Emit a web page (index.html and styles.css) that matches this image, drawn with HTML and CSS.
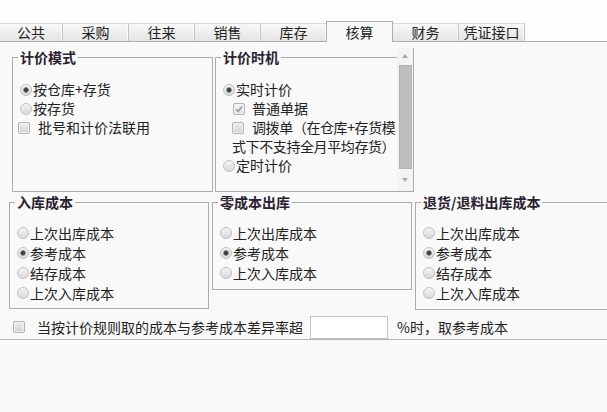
FILE: index.html
```html
<!DOCTYPE html>
<html lang="zh-CN">
<head>
<meta charset="utf-8">
<title>核算</title>
<link rel="stylesheet" href="styles.css">
</head>
<body>
<div class="top">
  <div class="tabs">
    <div class="tab first">公共</div>
    <div class="tab">采购</div>
    <div class="tab">往来</div>
    <div class="tab">销售</div>
    <div class="tab">库存</div>
    <div class="tab active">核算</div>
    <div class="tab">财务</div>
    <div class="tab">凭证接口</div>
  </div>
</div>

<div class="row1">
  <fieldset class="box mode">
    <legend>计价模式</legend>
    <div class="opts">
      <div class="opt"><span class="rb on"></span>按仓库+存货</div>
      <div class="opt"><span class="rb"></span>按存货</div>
      <div class="opt ck"><span class="cb"></span>批号和计价法联用</div>
    </div>
  </fieldset>
  <div class="scrollwrap">
    <fieldset class="box timing">
      <legend>计价时机</legend>
      <div class="opts">
        <div class="opt"><span class="rb on"></span>实时计价</div>
        <div class="opt sub"><span class="cb on"><svg viewBox="0 0 10 10" width="10" height="10"><path d="M2.2 5.2 L4.2 7.2 L8 2.6" fill="none" stroke="#9a9a9a" stroke-width="1.6"/></svg></span>普通单据</div>
        <div class="optw"><span class="cb"></span>调拨单（在仓库+存货模<br>式下不支持全月平均存货）</div>
        <div class="opt"><span class="rb"></span>定时计价</div>
      </div>
    </fieldset>
    <div class="vscroll">
      <div class="arr up"></div>
      <div class="thumb"></div>
      <div class="arr down"></div>
    </div>
  </div>
</div>

<div class="row2">
  <fieldset class="box in">
    <legend>入库成本</legend>
    <div class="opts2">
      <div class="opt"><span class="rb"></span>上次出库成本</div>
      <div class="opt"><span class="rb on"></span>参考成本</div>
      <div class="opt"><span class="rb"></span>结存成本</div>
      <div class="opt"><span class="rb"></span>上次入库成本</div>
    </div>
  </fieldset>
  <fieldset class="box zero">
    <legend>零成本出库</legend>
    <div class="opts2">
      <div class="opt"><span class="rb"></span>上次出库成本</div>
      <div class="opt"><span class="rb on"></span>参考成本</div>
      <div class="opt"><span class="rb"></span>上次入库成本</div>
    </div>
  </fieldset>
  <fieldset class="box ret">
    <legend>退货/退料出库成本</legend>
    <div class="opts2">
      <div class="opt"><span class="rb"></span>上次出库成本</div>
      <div class="opt"><span class="rb on"></span>参考成本</div>
      <div class="opt"><span class="rb"></span>结存成本</div>
      <div class="opt"><span class="rb"></span>上次入库成本</div>
    </div>
  </fieldset>
</div>

<div class="bottom">
  <span class="cb"></span>
  <span class="blabel">当按计价规则取的成本与参考成本差异率超</span>
  <input class="rate" type="text">
  <span class="tail">%时，取参考成本</span>
</div>
</body>
</html>
```

FILE: styles.css
```css
html, body {
  margin: 0;
  padding: 0;
  overflow: hidden;
}
body {
  background: #f9f9f9;
  font-family: "Noto Sans CJK SC", "Noto Sans", sans-serif;
  font-size: 14px;
  color: #222;
  width: 607px;
  height: 412px;
}

/* tabs */
.top {
  background: #fefefe;
  padding-top: 23px;
}
.tabs {
  display: flex;
  align-items: flex-end;
  height: 18px;
  border-bottom: 1px solid #adadad;
}
.tab {
  box-sizing: border-box;
  width: 66px;
  height: 18px;
  line-height: 17px;
  text-align: center;
  background: linear-gradient(#f8f8f8, #e4e4e4);
  border-top: 1px solid #dadada;
  border-right: 1px solid #c2c2c2;
  box-shadow: inset -1px 0 0 #fafafa;
  flex: none;
}
.tab.first {
  width: 63px;
}
.tab.active {
  height: 21px;
  margin-bottom: -1px;
  line-height: 20px;
  background: #f9f9f9;
  border: 1px solid #adadad;
  border-bottom: none;
  box-shadow: none;
  margin-left: -1px;
  width: 67px;
}

/* group boxes */
.box {
  margin: 0;
  padding: 0;
  min-width: 0;
  box-sizing: border-box;
  border: 1px solid #ababab;
}
.box legend {
  margin-left: 5px;
  padding: 0 2px;
  font-weight: bold;
  line-height: 18px;
  color: #2a2230;
}

.row1 {
  display: flex;
  align-items: flex-start;
  margin-top: 6px;
  padding-left: 12px;
  gap: 2px;
}
.mode {
  width: 201px;
  height: 144px;
}
.scrollwrap {
  display: flex;
}
.timing {
  width: 182px;
  height: 144px;
  border-right: none;
}
.opts {
  padding-top: 14px;
}
.opt {
  display: flex;
  align-items: center;
  height: 19px;
  line-height: 19px;
  white-space: nowrap;
  padding-left: 7px;
}
.opt.ck {
  padding-left: 5px;
}
.opt.ck .cb {
  margin-right: 8px;
}
.opt.sub {
  padding-left: 17px;
}
.opt.sub .cb {
  margin-right: 7px;
}
.optw {
  padding-left: 16px;
  line-height: 19px;
  white-space: nowrap;
  letter-spacing: -0.4px;
}
.optw .cb {
  display: inline-block;
  vertical-align: -1px;
  margin-right: 8px;
}

/* radios & checkboxes */
.rb {
  flex: none;
  box-sizing: border-box;
  width: 12px;
  height: 12px;
  margin-right: 1px;
  border: 1px solid #c0c0c0;
  border-radius: 50%;
  background: linear-gradient(#f4f4f4, #d9d9d9);
}
.rb.on {
  background: radial-gradient(circle, #333 0, #4a4a4a 1.8px, #9a9a9a 2.6px, transparent 3.2px), linear-gradient(#f4f4f4, #d9d9d9);
}
.cb {
  flex: none;
  box-sizing: border-box;
  width: 12px;
  height: 12px;
  border: 1px solid #b3b3b3;
  border-radius: 2px;
  background: linear-gradient(#ededed, #d3d3d3);
  box-shadow: inset 0 0 0 1px #f1f1f1;
}
.cb.on {
  display: flex;
  align-items: center;
  justify-content: center;
  background: linear-gradient(#f4f4f4, #e0e0e0);
}
.cb svg {
  display: block;
}

/* fake scrollbar */
.vscroll {
  box-sizing: border-box;
  width: 17px;
  height: 144px;
  background: #f3f3f3;
  border-right: 1px solid #ababab;
  border-bottom: 1px solid #ababab;
  display: flex;
  flex-direction: column;
  align-items: center;
}
.arr {
  width: 0;
  height: 0;
  border-left: 3.5px solid transparent;
  border-right: 3.5px solid transparent;
}
.arr.up {
  margin-top: 6px;
  border-bottom: 4px solid #a8a8a8;
}
.arr.down {
  margin-top: 9px;
  border-top: 4px solid #a8a8a8;
}
.thumb {
  box-sizing: border-box;
  width: 13px;
  height: 104px;
  margin-top: 7px;
  margin-left: 1px;
  background: #bdbdbd;
  border: 1px solid #b2b2b2;
}

/* second row */
.row2 {
  display: flex;
  align-items: flex-start;
  margin-top: 1px;
  padding-left: 9px;
  gap: 3px;
}
.in {
  width: 200px;
  height: 116px;
  flex: none;
}
.zero {
  width: 200px;
  height: 97px;
  flex: none;
}
.ret {
  width: 210px;
  height: 117px;
  flex: none;
}
.opts2 {
  padding-top: 12px;
}
.opts2 .opt {
  height: 20px;
  line-height: 20px;
}

/* bottom line */
.bottom {
  display: flex;
  align-items: center;
  height: 24px;
  padding: 5px 0 0 13px;
  border-bottom: 1px solid #b3b3b3;
  white-space: nowrap;
}
.bottom .cb {
  margin-right: 12px;
}
.blabel {
  margin-right: 7px;
}
.rate {
  box-sizing: border-box;
  width: 78px;
  height: 23px;
  margin: 0 9px 0 0;
  padding: 0 3px;
  border: 1px solid #c6c6c6;
  background: #fff;
  font: inherit;
  outline: none;
}
```
